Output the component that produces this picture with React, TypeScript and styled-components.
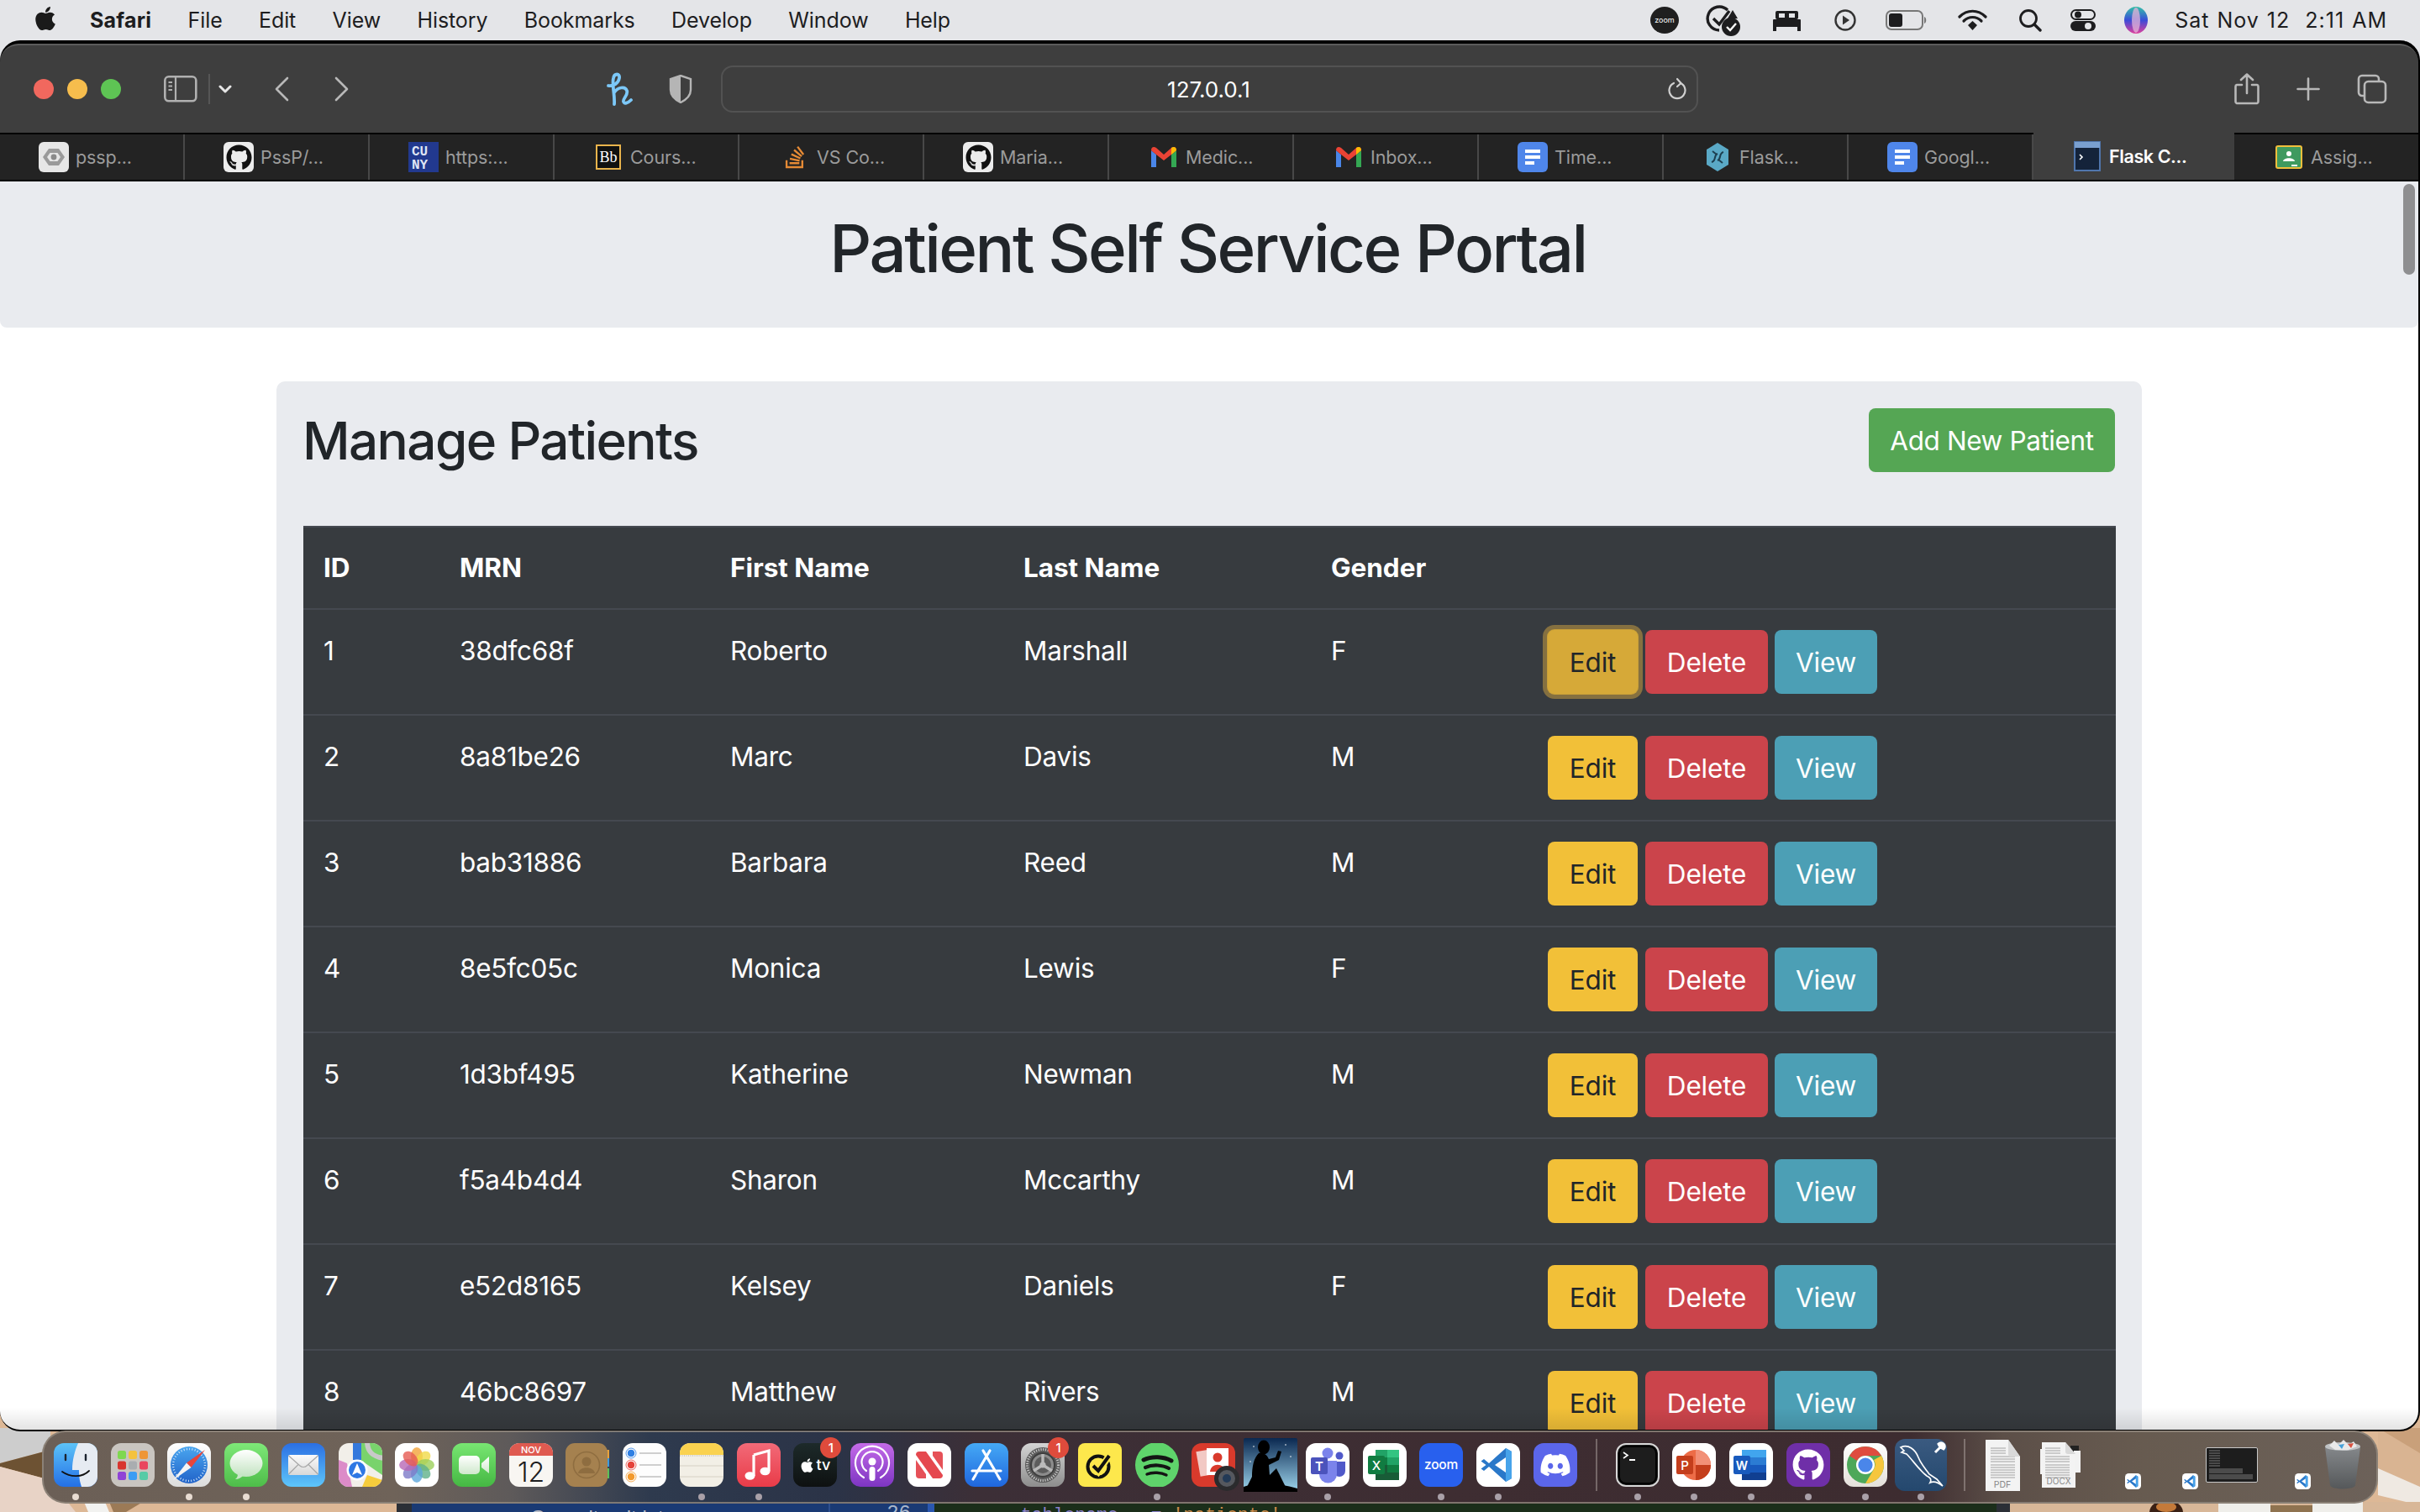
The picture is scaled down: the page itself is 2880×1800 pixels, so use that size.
import React from "react";
import styled, { createGlobalStyle } from "styled-components";
import { FaApple, FaGithub, FaDiscord, FaStackOverflow } from "react-icons/fa";

const Global = createGlobalStyle`
  html, body { margin: 0; padding: 0; width: 2880px; height: 1800px; overflow: hidden; }
  body { font-family: Inter, "Liberation Sans", sans-serif; }
  * { box-sizing: border-box; }
`;

/* ---------- desktop ---------- */
const Desktop = styled.div`
  position: relative; width: 2880px; height: 1800px; overflow: hidden;
  background: #e4e5e8; display: flex; flex-direction: column;
`;
const Wallpaper = styled.svg`
  position: absolute; left: 0; bottom: 0; width: 2880px; height: 130px;
`;

/* ---------- menu bar ---------- */
const MenuBar = styled.header`
  position: relative; height: 48px; flex: none; display: flex; align-items: center;
  padding: 0 39px 0 41px; color: #1d1d1f; font-size: 25px;
`;
const AppleMark = styled.span`
  display: flex; width: 26px; margin-right: 40px; font-size: 32px; margin-top: -4px; color: #1a1a1a;
`;
const MenuItem = styled.span<{ $bold?: boolean }>`
  margin-right: 43.4px; letter-spacing: ${p => (p.$bold ? "0.2px" : "-0.1px")}; font-weight: ${p => (p.$bold ? 700 : 400)};
`;
const StatusGroup = styled.div`
  margin-left: auto; display: flex; align-items: center;
`;
const StatusSlot = styled.span<{ $gap: number }>`
  display: flex; margin-left: ${p => p.$gap}px;
`;
const Clock = styled.span`
  margin-left: 32px; white-space: pre; font-size: 25px; letter-spacing: 1px; word-spacing: 1px;
`;

/* ---------- safari window ---------- */
const Window = styled.main`
  position: relative; z-index: 1; width: 2880px; height: 1656px; flex: none;
  display: flex; flex-direction: column; overflow: hidden;
  background: #000; border-radius: 24px 24px 24px 24px; padding-top: 4px;
  border-bottom: 2px solid #000; border-right: 2px solid #000;
`;
const Toolbar = styled.div`
  height: 106px; flex: none; position: relative; display: flex; align-items: center;
  background: #3e3e3e; border-top: 2px solid #5c5c5c; border-radius: 22px 22px 0 0;
`;
const Lights = styled.div`
  display: flex; gap: 16px; margin-left: 40px; margin-right: 51px;
`;
const Light = styled.span<{ $c: string }>`
  width: 24px; height: 24px; border-radius: 50%; background: ${p => p.$c};
`;
const ToolIcon = styled.span<{ $ml: number }>`
  display: flex; margin-left: ${p => p.$ml}px; flex: none;
`;
const UrlBar = styled.div`
  width: 1163px; height: 56px; margin-left: 34px; border: 2px solid #525252; border-radius: 14px;
  display: flex; align-items: center; justify-content: center; position: relative;
  color: #fff; font-size: 26px; letter-spacing: 0; padding-right: 2px;
`;
const Reload = styled.span`
  position: absolute; right: 12px; top: 12px; display: flex;
`;
const TabBar = styled.nav`
  height: 58px; flex: none; display: flex; background: #232323;
  border-top: 2px solid #000; border-bottom: 2px solid #000;
`;
const Tab = styled.div<{ $active?: boolean; $w: number; $pad: number }>`
  width: ${p => p.$w}px; flex: none; display: flex; align-items: center; gap: 8px;
  padding-left: ${p => p.$pad}px; font-size: 21.5px; white-space: nowrap;
  color: ${p => (p.$active ? "#fff" : "#9b9b9b")};
  font-weight: ${p => (p.$active ? 600 : 400)};
  letter-spacing: ${p => (p.$active ? "-0.4px" : "-0.1px")};
  background: ${p => (p.$active ? "#3e3e3e" : "transparent")};
  border-right: 2px solid ${p => (p.$active ? "transparent" : "#484848")};
  margin-top: ${p => (p.$active ? "-2px" : "0")};
  &:last-child { border-right: none; }
`;
const Favicon = styled.span<{ $bg?: string; $r?: number }>`
  width: 36px; height: 36px; flex: none; display: flex; align-items: center; justify-content: center;
  background: ${p => p.$bg || "transparent"}; border-radius: ${p => p.$r ?? 6}px;
`;

/* ---------- page ---------- */
const Page = styled.section`
  flex: 1; min-height: 0; position: relative; overflow: hidden; background: #fff;
  color: #212529; font-size: 32px; line-height: 48px;
`;
const Jumbotron = styled.div`
  background: #e9ebef; border-radius: 0 0 8px 8px; padding: 32px 3px 46px 0; text-align: center;
`;
const Title = styled.h1`
  margin: 0; font-size: 78px; line-height: 96px; font-weight: 500; letter-spacing: -2.55px;
`;
const Card = styled.div`
  width: 2220px; margin: 64px 0 0 329px; padding: 32px; background: #e9ebef; border-radius: 10px;
`;
const CardHead = styled.div`
  display: flex; justify-content: space-between; align-items: center; margin-bottom: 64px;
`;
const Heading = styled.h2`
  margin: 0 0 0 -1px; height: 76px; font-size: 62px; line-height: 78px; font-weight: 500; letter-spacing: -1.6px;
`;
const AddButton = styled.button`
  width: 293px; height: 76px; border: 0; border-radius: 8px; background: #55a654; color: #fff;
  font: 400 31.5px/48px Inter, sans-serif; letter-spacing: -0.4px; padding: 1px 0 0;
`;
const Table = styled.table`
  width: 2157px; table-layout: fixed; border-collapse: collapse; background: #373b3f; color: #fff;
`;
const Th = styled.th`
  text-align: left; padding: 24px; font-weight: 700; font-size: 31.5px; letter-spacing: -0.05px;
  border-top: 2px solid #454950; border-bottom: 0; height: 98px;
`;
const Td = styled.td`
  padding: 24px; vertical-align: top; border-top: 2px solid #454950; font-size: 31.5px; line-height: 50px; letter-spacing: -0.25px;
`;
const Actions = styled.div`
  display: flex; gap: 8px; height: 76px;
`;
const toneStyles = {
  edit: { bg: "#f2c038", fg: "#212529", w: 107 },
  del: { bg: "#cb444b", fg: "#fff", w: 146 },
  view: { bg: "#4c9fb5", fg: "#fff", w: 122 },
};
const ActionBtn = styled.button<{ $tone: keyof typeof toneStyles; $focus?: boolean }>`
  height: 76px; border: 0; border-radius: 8px; padding: 1px 0 0; letter-spacing: -0.2px;
  font: 400 31.5px/48px Inter, sans-serif;
  width: ${p => toneStyles[p.$tone].w}px;
  color: ${p => toneStyles[p.$tone].fg};
  background: ${p => (p.$focus ? "#d6a938" : toneStyles[p.$tone].bg)};
  box-shadow: ${p => (p.$focus ? "0 0 0 1px #c9a038, 0 0 0 6px #857040" : "none")};
  margin-right: ${p => (p.$tone === "edit" ? 1 : 0)}px;
`;
const ScrollThumb = styled.span`
  position: absolute; top: 3px; right: 4px; width: 14px; height: 108px; border-radius: 7px; background: #8e8e90;
`;
const DockShade = styled.span`
  position: absolute; left: 0; right: 0; bottom: 0; height: 26px;
  background: linear-gradient(180deg, rgba(0,0,0,0), rgba(0,0,0,.11));
`;

/* ---------- behind the dock ---------- */
const EditorWindow = styled.div`
  position: absolute; left: 472px; width: 1920px; bottom: 0; height: 11px; overflow: hidden;
  display: flex; background: #1a3a74; border-left: 18px solid #2b2f36; border-right: 16px solid #2b2f36;
  font: 21.5px/26px "Liberation Mono", monospace;
`;
const Sidebar = styled.div`
  width: 496px; flex: none; color: #b8bcc6; padding: 5px 0 0 141px; white-space: pre;
  font-family: "Liberation Sans", sans-serif; font-size: 24px;
`;
const Gutter = styled.div`
  width: 126px; flex: none; color: #a9b7cc; text-align: right; padding: 0 20px 0 0; font-size: 24px;
  border-right: 8px solid #2a57b0; border-left: 2px solid #2d4f8f;
`;
const CodeLine = styled.div`
  flex: 1; background: #1b2e1a; padding: 2px 0 0 77px; color: #8a80c8; white-space: pre;
`;
const Str = styled.span`
  color: #c98a4a;
`;

/* ---------- dock ---------- */
const DockRow = styled.footer`
  position: relative; z-index: 2; flex: 1; margin-top: -1px;
`;
const Dock = styled.div`
  position: relative; margin-left: 50px; width: 2780px; height: 87px; display: flex; align-items: center;
  padding: 0 0 5px 12px; gap: 15.73px; border-radius: 28px; border: 2px solid rgba(150,140,130,.75);
  background: linear-gradient(90deg, #6b5f56 0, #6f6359 15%, #5e5a5a 20%, #2e3a4e 26%, #2b3347 34%, #3c2f37 40%, #3e2d32 60%, #3d2c30 80%, #5c4f48 84%, #675b50 90%, #6c6159 100%);
`;
const DockItem = styled.div<{ $w?: number; $ml?: number }>`
  position: relative; flex: none; width: ${p => p.$w ?? 52}px; height: 52px;
  margin-left: ${p => p.$ml ?? 0}px; display: flex; align-items: center; justify-content: center;
`;
const Tile = styled.span<{ $bg: string }>`
  width: 52px; height: 52px; border-radius: 12px; background: ${p => p.$bg};
  display: flex; align-items: center; justify-content: center; color: #fff; font-size: 38px;
`;
const Dot = styled.i<{ $c?: string }>`
  position: absolute; left: 50%; bottom: -16px; width: 8px; height: 8px; margin-left: -4px;
  border-radius: 50%; background: ${p => p.$c || "#a9a0a8"};
`;
const Badge = styled.b`
  position: absolute; top: -7px; right: -5px; width: 25px; height: 25px; border-radius: 50%;
  background: #df4b3c; color: #fff; font: 500 15px/25px Inter, sans-serif; text-align: center;
`;
const Separator = styled.span<{ $ml: number; $mr: number }>`
  width: 2px; height: 62px; background: rgba(200,190,185,.4); flex: none;
  margin: 0 ${p => p.$mr}px 0 ${p => p.$ml}px;
`;
const MiniBadge = styled.span`
  position: absolute; right: 0; bottom: -3px; width: 19px; height: 19px; display: flex;
`;

/* ---------- small drawings ---------- */
type SP = { w: number; h: number; children: React.ReactNode };
const Ic = ({ w, h, children }: SP) => (
  <svg width={w} height={h} viewBox={`0 0 ${w} ${h}`} fill="none" style={{ display: "block" }}>{children}</svg>
);
const tool = { stroke: "#b8b8b8", strokeWidth: 2.6, strokeLinecap: "round" as const, strokeLinejoin: "round" as const };

const Vs = ({ size = 52 }: { size?: number }) => (
  <svg width={size} height={size} viewBox="0 0 52 52" style={{ display: "block" }}>
    <rect width="52" height="52" rx="12" fill="#fff" />
    <path d="M35 6 L42 10 V42 L35 46 L15 28 L9 33 L5.5 30.5 L11.5 26 L5.5 21.5 L9 19 L15 24 Z" fill="#2a78c9" />
    <path d="M35 6 L42 10 V42 L35 46 Z" fill="#47a3ea" />
    <path d="M35 17 L22 26 L35 35 Z" fill="#fff" />
  </svg>
);
const Gmail = () => (
  <svg width="30" height="24" viewBox="0 0 30 24">
    <path d="M0 4 V24 H6 V9 Z" fill="#4a86e8" />
    <path d="M24 9 V24 H30 V4 Z" fill="#34a853" />
    <path d="M0 4 C0 0 3 -1 6 1 L15 9 L24 1 C27 -1 30 0 30 4 L24 9 L15 16 L6 9 Z" fill="#ea4335" />
    <path d="M24 1 C27 -1 30 0 30 4 L24 9 Z" fill="#fbbc04" />
  </svg>
);
const Docs = () => (
  <Favicon $bg="#4f86ea">
    <svg width="22" height="24" viewBox="0 0 22 24">
      <rect x="2" y="3" width="18" height="4" fill="#fff" /><rect x="2" y="10" width="18" height="4" fill="#fff" /><rect x="2" y="17" width="11" height="4" fill="#fff" />
    </svg>
  </Favicon>
);

const tabs: { label: string; icon: React.ReactNode; active?: boolean; w?: number; pad?: number }[] = [
  { label: "pssp...", icon: <Favicon $bg="#e6e6e6"><svg width="28" height="24" viewBox="0 0 28 24"><path d="M8 2 H20 L27 12 L20 22 H8 L1 12 Z" fill="#9a9a9a" /><path d="M9.5 7 H18.5 L22 12 L18.5 17 H9.5 L6 12 Z" fill="#e6e6e6" /><circle cx="14" cy="12" r="3.4" fill="#8a8a8a" /></svg></Favicon> },
  { label: "PssP/...", icon: <Favicon $bg="#ececec"><FaGithub size={31} color="#111" /></Favicon> },
  { label: "https:...", pad: 46, icon: <Favicon $bg="#22398f" $r={0}><svg width="36" height="36" viewBox="0 0 36 36"><text x="4" y="16" fontFamily="Liberation Mono" fontWeight="700" fontSize="16" fill="#dfe4f4">CU</text><text x="4" y="32" fontFamily="Liberation Mono" fontWeight="700" fontSize="16" fill="#dfe4f4">NY</text></svg></Favicon> },
  { label: "Cours...", pad: 46, icon: <Favicon $r={2}><svg width="30" height="30" viewBox="0 0 30 30"><rect x="1" y="1" width="28" height="28" fill="#111" stroke="#e9b44c" strokeWidth="2" /><text x="15" y="21" textAnchor="middle" fontFamily="Liberation Serif" fontSize="18" fill="#fff">Bb</text></svg></Favicon> },
  { label: "VS Co...", pad: 48, icon: <Favicon><FaStackOverflow size={30} color="#e58a35" /></Favicon> },
  { label: "Maria...", icon: <Favicon $bg="#ececec"><FaGithub size={31} color="#111" /></Favicon> },
  { label: "Medic...", pad: 47, icon: <Favicon><Gmail /></Favicon> },
  { label: "Inbox...", pad: 47, icon: <Favicon><Gmail /></Favicon> },
  { label: "Time...", icon: <Docs /> },
  { label: "Flask...", icon: <Favicon><svg width="30" height="36" viewBox="0 0 30 36"><path d="M15 1 L28 9 V27 L15 35 L2 27 V9 Z" fill="#5aa9c6" /><path d="M8 24 C14 22 10 16 15 14 M22 12 C16 14 20 20 15 22 M9 11 L14 15 M16 21 L21 25" stroke="#1d3f50" strokeWidth="2" fill="none" /></svg></Favicon> },
  { label: "Googl...", icon: <Docs /> },
  { label: "Flask C...", active: true, w: 239, icon: <Favicon $r={0}><svg width="32" height="36" viewBox="0 0 32 36"><rect x="1" y="1" width="30" height="34" fill="#14233a" stroke="#5076ad" strokeWidth="2" /><rect x="1" y="1" width="30" height="7" fill="#7aa0d0" /><path d="M7 16 l3 3 -3 3" stroke="#fff" strokeWidth="1.6" fill="none" /></svg></Favicon> },
  { label: "Assig...", w: 221, pad: 47, icon: <Favicon $r={2}><svg width="32" height="28" viewBox="0 0 32 28"><rect x="1" y="1" width="30" height="26" rx="2" fill="#3f9a5f" stroke="#f1bf3c" strokeWidth="2" /><circle cx="16" cy="10" r="3" fill="#fff" /><path d="M9 19 C10 14 22 14 23 19 Z" fill="#fff" /><rect x="19" y="23" width="7" height="2" fill="#fff" /></svg></Favicon> },
];

const rows = [
  ["1", "38dfc68f", "Roberto", "Marshall", "F"],
  ["2", "8a81be26", "Marc", "Davis", "M"],
  ["3", "bab31886", "Barbara", "Reed", "M"],
  ["4", "8e5fc05c", "Monica", "Lewis", "F"],
  ["5", "1d3bf495", "Katherine", "Newman", "M"],
  ["6", "f5a4b4d4", "Sharon", "Mccarthy", "M"],
  ["7", "e52d8165", "Kelsey", "Daniels", "F"],
  ["8", "46bc8697", "Matthew", "Rivers", "M"],
];

const DockSvg = ({ children, w = 52, h = 52 }: { children: React.ReactNode; w?: number; h?: number }) => (
  <svg width={w} height={h} viewBox={`0 0 ${w} ${h}`} style={{ display: "block", flex: "none" }}>{children}</svg>
);
const Grad = ({ id, a, b, x = false }: { id: string; a: string; b: string; x?: boolean }) => (
  <linearGradient id={id} x1="0" y1="0" x2={x ? 1 : 0} y2={x ? 0 : 1}><stop offset="0" stopColor={a} /><stop offset="1" stopColor={b} /></linearGradient>
);

const Finder = () => (
  <DockSvg>
    <defs><Grad id="fb" a="#5cc3f8" b="#2470e6" /></defs>
    <rect width="52" height="52" rx="12" fill="url(#fb)" />
    <path d="M29 0 H40 A12 12 0 0 1 52 12 V40 A12 12 0 0 1 40 52 H33 C31 46 30 41 30 32 H22 C22 20 25 9 29 0Z" fill="#e6ebf2" />
    <path d="M14 14 V20 M38 14 V20" stroke="#1c2430" strokeWidth="2.4" strokeLinecap="round" />
    <path d="M10 34 C20 41 34 41 42 33" stroke="#111" strokeWidth="1.8" fill="none" strokeLinecap="round" />
  </DockSvg>
);
const Launchpad = () => {
  const c = ["#7fd84f", "#f4c23e", "#ee9636", "#d8352e", "#a9adb0", "#e9465e", "#8f43d6", "#3c9cf3", "#56cba6"];
  return (
    <DockSvg>
      <rect width="52" height="52" rx="12" fill="#c9c5c0" />
      {c.map((f, i) => <rect key={i} x={8 + (i % 3) * 13} y={9 + Math.floor(i / 3) * 12.5} width="10" height="10" rx="2.5" fill={f} />)}
    </DockSvg>
  );
};
const Safari = () => (
  <DockSvg>
    <defs><Grad id="sf" a="#ffffff" b="#dcdcdc" /><Grad id="sb" a="#4aa6ef" b="#2163c9" /></defs>
    <rect width="52" height="52" rx="12" fill="url(#sf)" />
    <circle cx="26" cy="26" r="22" fill="url(#sb)" />
    <circle cx="26" cy="26" r="19" fill="none" stroke="#cfe4f8" strokeWidth="2.4" strokeDasharray="1 2.3" />
    <polygon points="45,8 23,23.5 28.5,29" fill="#e8453a" />
    <polygon points="7,44 23,23.5 28.5,29" fill="#f4f4f4" />
  </DockSvg>
);
const Messages = () => (
  <DockSvg>
    <defs><Grad id="mg" a="#7ee878" b="#4ebd49" /><Grad id="mw" a="#ffffff" b="#c2e3c0" /></defs>
    <rect width="52" height="52" rx="12" fill="url(#mg)" />
    <ellipse cx="26" cy="24" rx="19.5" ry="16" fill="url(#mw)" />
    <path d="M16 36 C16 40 15 41 13 43 C17 43 20 41 22 39 Z" fill="#c8e6c6" />
  </DockSvg>
);
const Mail = () => (
  <DockSvg>
    <defs><Grad id="ml" a="#2b6fe3" b="#5ec6fb" /><Grad id="me" a="#fbfbfb" b="#d8d8d8" /></defs>
    <rect width="52" height="52" rx="12" fill="url(#ml)" />
    <rect x="8" y="14" width="36" height="24" rx="2" fill="url(#me)" />
    <path d="M8.5 15 L22 27 C24 29 28 29 30 27 L43.5 15 M8.5 37 L20 25.5 M43.5 37 L32 25.5" stroke="#a8a8a8" strokeWidth="1.2" fill="none" />
  </DockSvg>
);
const Maps = () => (
  <DockSvg>
    <defs><clipPath id="mpc"><rect width="52" height="52" rx="12" /></clipPath></defs>
    <g clipPath="url(#mpc)">
      <rect width="52" height="52" fill="#f2efe9" />
      <polygon points="22,0 52,0 52,38 26,20" fill="#79d36c" />
      <polygon points="0,20 10,24 16,52 0,52" fill="#dc8bc8" />
      <polygon points="28,52 52,52 52,44 34,38" fill="#f6cc3c" />
      <rect x="17" y="0" width="10" height="20" fill="#3478dc" />
      <path d="M34 -2 C34 10 40 16 54 18" stroke="#c9c9c9" strokeWidth="6" fill="none" />
      <circle cx="22" cy="32" r="12.5" fill="#fff" />
      <circle cx="22" cy="32" r="10" fill="#2f78e4" />
      <polygon points="22,24 28,38 22,35 16,38" fill="#fff" />
    </g>
  </DockSvg>
);
const Photos = () => {
  const c = ["#f2a23a", "#f0d948", "#9ccf5a", "#5fb089", "#5da6dc", "#7d7ac8", "#b868b6", "#e65b52"];
  return (
    <DockSvg>
      <rect width="52" height="52" rx="12" fill="#fff" />
      {c.map((f, i) => <ellipse key={i} cx="26" cy="15.5" rx="7" ry="10.5" fill={f} opacity=".8" transform={`rotate(${i * 45} 26 26)`} />)}
    </DockSvg>
  );
};
const FaceTime = () => (
  <DockSvg>
    <defs><Grad id="ft" a="#78e672" b="#45b843" /><Grad id="fw" a="#fff" b="#cfe8cc" /></defs>
    <rect width="52" height="52" rx="12" fill="url(#ft)" />
    <rect x="8" y="15" width="25" height="22" rx="5" fill="url(#fw)" />
    <path d="M35 24 L44 16 V36 L35 29 Z" fill="url(#fw)" />
  </DockSvg>
);
const Calendar = () => (
  <DockSvg>
    <rect width="52" height="52" rx="12" fill="#f8f6f2" />
    <path d="M12 0 H40 A12 12 0 0 1 52 12 V15 H0 V12 A12 12 0 0 1 12 0Z" fill="#df5a50" />
    <text x="26" y="12" textAnchor="middle" fontFamily="Inter" fontWeight="500" fontSize="11" fill="#fff">NOV</text>
    <text x="26" y="46" textAnchor="middle" fontFamily="Inter" fontWeight="300" fontSize="32" fill="#1d1d1f">12</text>
  </DockSvg>
);
const Contacts = () => (
  <DockSvg>
    <rect x="48" y="8" width="4" height="10" fill="#e8a23c" /><rect x="48" y="18" width="4" height="10" fill="#3d9ae0" /><rect x="48" y="30" width="4" height="12" fill="#5cc15a" />
    <rect width="50" height="52" rx="11" fill="#a5814f" />
    <circle cx="25" cy="26" r="15.5" fill="none" stroke="#8e6d40" strokeWidth="1.6" />
    <circle cx="25" cy="22" r="5.5" fill="#8e6d40" /><path d="M15 36 C16 27 34 27 35 36 Z" fill="#8e6d40" />
  </DockSvg>
);
const Reminders = () => (
  <DockSvg>
    <rect width="52" height="52" rx="12" fill="#fdfdfd" />
    {[["#2f7fe3", 12], ["#e5433b", 26], ["#f29a2e", 40]].map(([c, y]) => (
      <g key={String(c)}><circle cx="10" cy={Number(y)} r="4.8" fill={String(c)} stroke="#fff" strokeWidth="1" /><circle cx="10" cy={Number(y)} r="6" fill="none" stroke={String(c)} strokeWidth=".8" /><rect x="20" y={Number(y) - 1} width="26" height="2" fill="#cfcfcf" /></g>
    ))}
  </DockSvg>
);
const Notes = () => (
  <DockSvg>
    <rect width="52" height="52" rx="12" fill="#f2efe6" />
    <path d="M12 0 H40 A12 12 0 0 1 52 12 V14 H0 V12 A12 12 0 0 1 12 0Z" fill="#fad24f" />
    <path d="M0 15 H52" stroke="#aaa" strokeWidth="1" strokeDasharray="1 1.5" />
    <path d="M0 27 H52 M0 40 H52" stroke="#dfdbd0" strokeWidth="1.5" />
  </DockSvg>
);
const Music = () => (
  <DockSvg>
    <defs><Grad id="mu" a="#f26a78" b="#e93b48" /></defs>
    <rect width="52" height="52" rx="12" fill="url(#mu)" />
    <path d="M20 14 L38 9 V33" stroke="#fff" strokeWidth="3.2" fill="none" /><path d="M20 14 V39" stroke="#fff" strokeWidth="3.2" fill="none" />
    <ellipse cx="15.5" cy="39" rx="6" ry="4.8" fill="#fff" /><ellipse cx="33.5" cy="33.5" rx="6" ry="4.8" fill="#fff" />
  </DockSvg>
);
const Podcasts = () => (
  <DockSvg>
    <defs><Grad id="pc" a="#c46be8" b="#7d35c2" /></defs>
    <rect width="52" height="52" rx="12" fill="url(#pc)" />
    <g fill="none" stroke="#fff" strokeWidth="2.2" strokeLinecap="round">
      <path d="M16 41 A20 20 0 1 1 36 41" /><path d="M19 33 A12.5 12.5 0 1 1 33 33" />
    </g>
    <circle cx="26" cy="22" r="4.5" fill="#fff" /><rect x="22.5" y="28" width="7" height="17" rx="3.5" fill="#fff" />
  </DockSvg>
);
const News = () => (
  <DockSvg>
    <rect width="52" height="52" rx="12" fill="#fff" />
    <path d="M10 14 A4 4 0 0 1 14 10 H22 L42 38 A4 4 0 0 1 38 42 H30 L10 14Z" fill="#e5484f" />
    <path d="M10 20 L22 37 V42 H14 A4 4 0 0 1 10 38Z M30 10 H38 A4 4 0 0 1 42 14 V32 L30 15Z" fill="#e5484f" opacity=".95" />
  </DockSvg>
);
const AppStore = () => (
  <DockSvg>
    <defs><Grad id="as" a="#45a9f5" b="#1f66de" /></defs>
    <rect width="52" height="52" rx="12" fill="url(#as)" />
    <path d="M30 9 L14 36 M22 9 L38 36 M9 33 H43 M10 43 L13 38 M42 43 L39 38" stroke="#fff" strokeWidth="3.2" strokeLinecap="round" fill="none" />
  </DockSvg>
);
const SysPref = () => (
  <DockSvg>
    <defs><Grad id="sp" a="#d4d4d4" b="#8d8d8d" /></defs>
    <rect width="52" height="52" rx="12" fill="url(#sp)" />
    <circle cx="26" cy="26" r="21" fill="#5a5a5a" />
    <circle cx="26" cy="26" r="18.5" fill="none" stroke="#c9c9c9" strokeWidth="3" strokeDasharray="1.2 1.6" />
    <circle cx="26" cy="26" r="14" fill="#8c8c8c" stroke="#3e3e3e" strokeWidth="2" />
    <circle cx="26" cy="26" r="10" fill="#5c5c5c" />
    <path d="M26 26 V13 M26 26 L15 33 M26 26 L37 33" stroke="#b9b9b9" strokeWidth="3.4" /><circle cx="26" cy="26" r="3.6" fill="#bbb" />
  </DockSvg>
);
const Norton = () => (
  <DockSvg>
    <rect width="52" height="52" rx="8" fill="#fde84c" />
    <circle cx="24" cy="28" r="12.5" fill="none" stroke="#111" strokeWidth="4" />
    <path d="M17 27 L24 34 L37 15" stroke="#fde84c" strokeWidth="8" fill="none" />
    <path d="M18 27 L24 33 L37 15" stroke="#111" strokeWidth="4" fill="none" />
  </DockSvg>
);
const Spotify = () => (
  <DockSvg>
    <ellipse cx="26" cy="26" rx="26" ry="27" fill="#5fd36b" />
    <g fill="none" stroke="#141414" strokeLinecap="round">
      <path d="M10 20 C20 15 34 16 43 21" strokeWidth="5" /><path d="M12 29 C21 25 33 26 40 30" strokeWidth="4.2" /><path d="M14 37 C21 34 31 35 37 38" strokeWidth="3.4" />
    </g>
  </DockSvg>
);
const PhotoBooth = () => (
  <svg width="60" height="60" viewBox="0 0 60 60" style={{ display: "block", flex: "none", marginLeft: 8, marginTop: 8 }}>
    <rect x="0" y="0" width="52" height="52" rx="12" fill="#d93a2c" />
    <rect x="8" y="8" width="24" height="30" fill="#f2c9c4" transform="rotate(-10 20 24)" />
    <rect x="18" y="6" width="26" height="32" fill="#fff" />
    <circle cx="31" cy="17" r="5.5" fill="#d93a2c" /><path d="M22 34 C23 23 39 23 40 34 Z" fill="#d93a2c" />
    <circle cx="42" cy="42" r="15" fill="#2b2b2d" /><circle cx="42" cy="42" r="10" fill="#55585e" /><circle cx="42" cy="42" r="5" fill="#233a56" />
  </svg>
);
const Kindle = () => (
  <svg width="64" height="64" viewBox="0 0 64 64" style={{ display: "block", flex: "none" }}>
    <defs><Grad id="kd" a="#0a2850" b="#9fd6ee" /></defs>
    <rect width="64" height="64" rx="2" fill="url(#kd)" />
    <circle cx="50" cy="8" r=".8" fill="#fff" /><circle cx="12" cy="10" r=".8" fill="#fff" /><circle cx="56" cy="22" r=".8" fill="#fff" /><circle cx="8" cy="28" r=".8" fill="#fff" />
    <path d="M0 58 C14 52 44 54 64 60 V64 H0Z" fill="#000" />
    <ellipse cx="24" cy="11" rx="7" ry="8.5" fill="#000" />
    <path d="M18 18 C12 24 10 34 10 46 L4 58 H50 C46 50 42 42 39 36 L31 44 L30 32 L42 26 L45 16 L41 15 L38 23 L30 25 C28 20 24 17 18 18Z" fill="#000" />
  </svg>
);
const Teams = () => (
  <DockSvg>
    <rect width="52" height="52" rx="12" fill="#fff" />
    <circle cx="26" cy="12" r="6.5" fill="#7b83eb" /><circle cx="40" cy="15" r="4.5" fill="#5059c9" />
    <path d="M33 22 H47 V33 A7 7 0 0 1 33 33Z" fill="#5059c9" />
    <path d="M16 21 H37 V37 A10.5 10.5 0 0 1 16 37Z" fill="#7b83eb" />
    <rect x="6" y="17" width="20" height="20" rx="2" fill="#4b53bc" />
    <text x="16" y="33" textAnchor="middle" fontFamily="Inter" fontWeight="600" fontSize="15" fill="#fff">T</text>
  </DockSvg>
);
const Excel = () => (
  <DockSvg>
    <rect width="52" height="52" rx="12" fill="#fff" />
    <rect x="15" y="8" width="14" height="9" fill="#21a366" /><rect x="29" y="8" width="14" height="9" fill="#33c481" />
    <rect x="15" y="17" width="14" height="9" fill="#107c41" /><rect x="29" y="17" width="14" height="9" fill="#21a366" />
    <rect x="15" y="26" width="14" height="9" fill="#185c37" /><rect x="29" y="26" width="14" height="9" fill="#107c41" />
    <rect x="15" y="35" width="28" height="9" fill="#185c37" />
    <rect x="6" y="15" width="20" height="22" rx="2" fill="#107c41" />
    <text x="16" y="32" textAnchor="middle" fontFamily="Inter" fontWeight="500" fontSize="15" fill="#fff">X</text>
  </DockSvg>
);
const ZoomApp = () => (
  <DockSvg>
    <rect width="52" height="52" rx="12" fill="#2860ee" />
    <text x="26" y="31" textAnchor="middle" fontFamily="Inter" fontWeight="500" fontSize="15.5" fill="#fff" letterSpacing="-.2">zoom</text>
  </DockSvg>
);
const TerminalApp = () => (
  <DockSvg>
    <rect x="1" y="1" width="50" height="50" rx="11" fill="#1a1a1a" stroke="#d8d8d8" strokeWidth="2" />
    <rect x="4" y="4" width="44" height="44" rx="8" fill="#1d1d1d" stroke="#000" strokeWidth="2" />
    <path d="M9 11 L14 14.5 L9 18" stroke="#fff" strokeWidth="1.6" fill="none" /><rect x="16" y="19" width="7" height="2" fill="#fff" />
  </DockSvg>
);
const Ppt = () => (
  <DockSvg>
    <rect width="52" height="52" rx="12" fill="#fff" />
    <circle cx="28" cy="26" r="18" fill="#ed6c47" />
    <path d="M28 8 A18 18 0 0 1 46 26 H28Z" fill="#f29077" />
    <path d="M28 26 H46 A18 18 0 0 1 28 44Z" fill="#c43e1c" />
    <rect x="5" y="15" width="20" height="22" rx="2" fill="#c43e1c" />
    <text x="15" y="32" textAnchor="middle" fontFamily="Inter" fontWeight="500" fontSize="15" fill="#fff">P</text>
  </DockSvg>
);
const Word = () => (
  <DockSvg>
    <rect width="52" height="52" rx="12" fill="#fff" />
    <rect x="15" y="8" width="29" height="9" fill="#41a5ee" /><rect x="15" y="17" width="29" height="9" fill="#2b7cd3" /><rect x="15" y="26" width="29" height="9" fill="#185abd" /><rect x="15" y="35" width="29" height="9" fill="#103f91" />
    <rect x="5" y="15" width="20" height="22" rx="2" fill="#185abd" />
    <text x="15" y="32" textAnchor="middle" fontFamily="Inter" fontWeight="600" fontSize="14" fill="#fff">W</text>
  </DockSvg>
);
const Chrome = () => (
  <DockSvg>
    <defs><Grad id="crw" a="#fff" b="#e4e0da" /></defs>
    <rect width="52" height="52" rx="12" fill="url(#crw)" />
    <circle cx="26" cy="26" r="22" fill="#4da85a" />
    <path d="M26 4 A22 22 0 0 1 45 15 H26 A11 11 0 0 0 16 21 L7 15 A22 22 0 0 1 26 4Z" fill="#df4c3f" />
    <path d="M45 15 A22 22 0 0 1 26 48 L36 31 A11 11 0 0 0 36 20 Z" fill="#f6c63d" />
    <circle cx="26" cy="26" r="11" fill="#fff" /><circle cx="26" cy="26" r="8.6" fill="#4a86ea" />
  </DockSvg>
);
const MySql = () => (
  <svg width="62" height="62" viewBox="0 0 62 62" style={{ display: "block", flex: "none" }}>
    <defs><Grad id="mq" a="#3a5a80" b="#24486e" /></defs>
    <rect width="62" height="62" rx="12" fill="url(#mq)" />
    <path d="M7 10 C16 6 24 12 28 22 C31 30 37 36 41 42 L50 48 L57 56 C52 52 46 50 42 52 C44 48 42 46 38 44 C28 36 22 26 14 18 L8 16 L11 14Z" fill="none" stroke="#fff" strokeWidth="1.7" />
    <path d="M48 16 L55 9 M52 6 A4 4 0 0 1 58 12 L54 10 Z" stroke="#fff" strokeWidth="3" fill="#fff" />
  </svg>
);
const DocLines = () => (
  <g stroke="#8d8d8d" strokeWidth=".8">
    {[10, 13, 16, 20, 23, 26, 30, 33, 36, 39, 42, 45].map(y => <path key={y} d={`M6 ${y} H${y < 18 ? 24 : 35}`} />)}
  </g>
);
const PdfDoc = () => (
  <svg width="41" height="61" viewBox="0 0 41 61" style={{ display: "block", flex: "none" }}>
    <path d="M0 0 H27 L41 20 V61 H0Z" fill="#f3f3f3" /><DocLines />
    <path d="M27 0 L41 20 H30 Q27 20 27 17Z" fill="#d9d9d9" />
    <text x="20" y="57" textAnchor="middle" fontFamily="Inter" fontSize="10.5" fill="#888">PDF</text>
  </svg>
);
const DocxDoc = () => (
  <svg width="48" height="54" viewBox="0 0 48 54" style={{ display: "block", flex: "none" }}>
    <rect x="36" y="4" width="10" height="30" fill="#222" /><rect x="40" y="10" width="8" height="26" fill="#f2f2f2" /><rect x="0" y="8" width="10" height="30" fill="#f2f2f2" />
    <path d="M2 0 H30 L42 14 V54 H2Z" fill="#f3f3f3" /><g transform="translate(0 -3)"><DocLines /></g>
    <path d="M30 0 L42 14 H33 Q30 14 30 11Z" fill="#d9d9d9" />
    <text x="22" y="50" textAnchor="middle" fontFamily="Inter" fontSize="10" fill="#888">DOCX</text>
  </svg>
);
const TermThumb = () => (
  <svg width="62" height="42" viewBox="0 0 62 42" style={{ display: "block", flex: "none" }}>
    <rect x=".5" y=".5" width="61" height="41" rx="1.5" fill="#1d1d1d" stroke="#c8c8c8" />
    <g stroke="#b8b8b8" strokeWidth=".6">
      {[4, 7, 10, 13, 16, 19, 22].map(y => <path key={y} d={`M4 ${y} H${14 + (y % 3) * 3}`} />)}
      {[26, 28, 30, 33, 35, 37].map(y => <path key={y} d={`M4 ${y} H${y > 31 ? 56 : 44}`} />)}
    </g>
  </svg>
);
const Trash = () => (
  <svg width="46" height="60" viewBox="0 0 46 60" style={{ display: "block", flex: "none" }}>
    <defs><Grad id="tr" a="#84878a" b="#55585a" /></defs>
    <path d="M2 9 L8 54 C9 60 37 60 38 54 L44 9Z" fill="url(#tr)" />
    <ellipse cx="23" cy="8" rx="21" ry="5" fill="#bfc2c4" />
    <path d="M7 7 L13 1 L18 6 L24 0 L30 6 L36 2 L40 8 L30 12 L14 12Z" fill="#e9e9e9" />
    <path d="M18 6 L22 11 L25 5Z" fill="#46a0d8" /><path d="M29 5 L33 10 L36 4Z" fill="#d8503f" />
  </svg>
);

export default function App() {
  return (
    <Desktop>
      <Global />
      <Wallpaper viewBox="0 0 2880 130" preserveAspectRatio="none">
        <rect width="2880" height="130" fill="#ddb896" />
        <polygon points="0,30 60,30 60,56 0,72" fill="#cdcdcd" />
        <polygon points="0,72 60,56 60,92 0,76" fill="#6d5233" />
        <polygon points="0,76 60,92 90,130 0,130" fill="#e8d3c6" />
        <polygon points="100,118 125,118 130,130 105,130" fill="#f2f2f0" />
        <polygon points="130,118 170,118 150,130 135,130" fill="#9c7a56" />
        <polygon points="2830,30 2880,30 2880,64" fill="#c9a07a" />
        <polygon points="2830,30 2880,60 2880,100 2830,78" fill="#d9b492" />
        <polygon points="2830,78 2880,100 2880,122 2830,110" fill="#efe9e2" />
        <polygon points="2392,118 2880,118 2880,130 2392,130" fill="#d8b798" />
        <rect x="2640" y="118" width="62" height="12" fill="#efeeea" />
        <rect x="2702" y="122" width="50" height="8" fill="#8f7350" />
        <rect x="2752" y="118" width="60" height="12" fill="#efeeea" />
        <ellipse cx="2578" cy="130" rx="20" ry="14" fill="#3a2014" />
        <ellipse cx="2578" cy="124" rx="12" ry="6" fill="#c47a3a" />
      </Wallpaper>
      <MenuBar>
        <AppleMark><FaApple /></AppleMark>
        <MenuItem $bold>Safari</MenuItem>
        {["File", "Edit", "View", "History", "Bookmarks", "Develop", "Window", "Help"].map(m => <MenuItem key={m}>{m}</MenuItem>)}
        <StatusGroup>
          <StatusSlot $gap={0}>
            <Ic w={34} h={32}><ellipse cx="17" cy="16" rx="17" ry="16" fill="#1f1f1f" /><text x="17" y="19" textAnchor="middle" fontFamily="Inter" fontSize="9" fill="#fff">zoom</text></Ic>
          </StatusSlot>
          <StatusSlot $gap={32}>
            <Ic w={42} h={40}><path d="M26 8 A14 14 0 1 0 16 32" stroke="#1d1d1f" strokeWidth="3.4" /><path d="M9 18 L16 25 L28 9" stroke="#1d1d1f" strokeWidth="3.4" /><path d="M32 8 L38 18 H26Z" fill="#1d1d1f" /><circle cx="30" cy="28" r="11" fill="#1d1d1f" /><path d="M25 28 L29 32 L36 24" stroke="#fff" strokeWidth="2.4" /></Ic>
          </StatusSlot>
          <StatusSlot $gap={38}>
            <Ic w={33} h={26}><rect x="3" y="2" width="27" height="10" rx="2" fill="#1d1d1f" /><rect x="7" y="5" width="7" height="5" fill="#e4e5e8" /><rect x="19" y="5" width="7" height="5" fill="#e4e5e8" /><rect x="0" y="12" width="33" height="9" rx="1" fill="#1d1d1f" /><rect x="0" y="20" width="4" height="6" fill="#1d1d1f" /><rect x="29" y="20" width="4" height="6" fill="#1d1d1f" /></Ic>
          </StatusSlot>
          <StatusSlot $gap={40}>
            <Ic w={26} h={26}><circle cx="13" cy="13" r="11.5" stroke="#333" strokeWidth="2.4" /><path d="M10 7.5 L18 13 L10 18.5Z" fill="#333" /></Ic>
          </StatusSlot>
          <StatusSlot $gap={35}>
            <Ic w={50} h={24}><rect x="1" y="1" width="43" height="22" rx="6" stroke="#777" strokeWidth="2" /><rect x="4" y="4" width="16" height="16" rx="3" fill="#1d1d1f" /><path d="M46 8 C49 9 49 15 46 16Z" fill="#777" /></Ic>
          </StatusSlot>
          <StatusSlot $gap={36}>
            <Ic w={35} h={26}><path d="M2 9 C11 0 24 0 33 9" stroke="#1d1d1f" strokeWidth="3.2" strokeLinecap="round" /><path d="M7 14 C13 8 22 8 28 14" stroke="#1d1d1f" strokeWidth="3.2" strokeLinecap="round" /><path d="M12 19 L17.5 14 L23 19 L17.5 25Z" fill="#1d1d1f" /></Ic>
          </StatusSlot>
          <StatusSlot $gap={37}>
            <Ic w={28} h={28}><circle cx="12" cy="12" r="9.5" stroke="#1d1d1f" strokeWidth="2.8" /><path d="M19 19 L26 26" stroke="#1d1d1f" strokeWidth="3.4" strokeLinecap="round" /></Ic>
          </StatusSlot>
          <StatusSlot $gap={34}>
            <Ic w={30} h={26}><rect x="1" y="1" width="28" height="11" rx="5.5" stroke="#1d1d1f" strokeWidth="2" /><circle cx="9" cy="6.5" r="4" fill="#1d1d1f" /><rect x="0" y="14" width="30" height="12" rx="6" fill="#1d1d1f" /><circle cx="21" cy="20" r="4" fill="#e4e5e8" /></Ic>
          </StatusSlot>
          <StatusSlot $gap={34}>
            <Ic w={28} h={32}><defs><linearGradient id="si" x1="0" y1="0" x2="0" y2="1"><stop offset="0" stopColor="#34c0a8" /><stop offset=".5" stopColor="#3a4cd8" /><stop offset="1" stopColor="#e0409c" /></linearGradient></defs><ellipse cx="14" cy="16" rx="14" ry="16" fill="url(#si)" /><ellipse cx="14" cy="16" rx="5" ry="15" fill="#e4b4d8" opacity=".75" /></Ic>
          </StatusSlot>
          <Clock>Sat Nov 12  2:11 AM</Clock>
        </StatusGroup>
      </MenuBar>

      <Window>
        <Toolbar>
          <Lights><Light $c="#f1685e" /><Light $c="#f6bd4d" /><Light $c="#5ec454" /></Lights>
          <ToolIcon $ml={0}>
            <Ic w={40} h={32}><rect x="1.3" y="1.3" width="37" height="29" rx="4.5" stroke="#b0b0b0" strokeWidth="2.6" /><path d="M14 2 V30" stroke="#b0b0b0" strokeWidth="2.2" /><path d="M5.5 8 H10 M5.5 12.5 H10 M5.5 17 H10" stroke="#b0b0b0" strokeWidth="2" /></Ic>
          </ToolIcon>
          <ToolIcon $ml={13}><Ic w={2} h={36}><rect width="2" height="36" fill="#565656" /></Ic></ToolIcon>
          <ToolIcon $ml={10}><Ic w={16} h={12}><path d="M2 3 L8 9 L14 3" stroke="#e6e6e6" strokeWidth="3" strokeLinecap="round" strokeLinejoin="round" /></Ic></ToolIcon>
          <ToolIcon $ml={50}><Ic w={18} h={30}><path d="M16 2 L3 15 L16 28" {...tool} /></Ic></ToolIcon>
          <ToolIcon $ml={54}><Ic w={18} h={30}><path d="M2 2 L15 15 L2 28" {...tool} /></Ic></ToolIcon>
          <ToolIcon $ml={302}>
            <Ic w={36} h={40}><path d="M13 38 C14 28 10 14 12 7 C13 1 20 1 19 7 C18 13 12 17 6 16 M13 24 C17 18 26 16 28 22 C30 27 23 31 24 35 C25 38 29 37 33 33" stroke="#7cc8f8" strokeWidth="3.8" strokeLinecap="round" /></Ic>
          </ToolIcon>
          <ToolIcon $ml={42}>
            <Ic w={28} h={34}><path d="M14 1 L26 5 V18 C26 25 20 30 14 33 C8 30 2 25 2 18 V5Z" fill="#3e3e3e" stroke="#b5b5b5" strokeWidth="2.4" /><path d="M14 1 L2 5 V18 C2 25 8 30 14 33Z" fill="#b5b5b5" /></Ic>
          </ToolIcon>
          <UrlBar>
            127.0.0.1
            <Reload>
              <Ic w={22} h={28}><path d="M15 7 A9.5 9.5 0 1 1 7 7" stroke="#d0d0d0" strokeWidth="2.2" strokeLinecap="round" /><path d="M11 2 L15.5 7 L11 11" stroke="#d0d0d0" strokeWidth="2.2" strokeLinecap="round" strokeLinejoin="round" /></Ic>
            </Reload>
          </UrlBar>
          <ToolIcon $ml={638}>
            <Ic w={30} h={38}><path d="M9 14 H3 A2 2 0 0 0 1.5 16 V34 A2 2 0 0 0 3 36 H27 A2 2 0 0 0 28.5 34 V16 A2 2 0 0 0 27 14 H21 M15 24 V2 M8 8 L15 1.5 L22 8" {...tool} /></Ic>
          </ToolIcon>
          <ToolIcon $ml={44}><Ic w={28} h={28}><path d="M14 1.5 V26.5 M1.5 14 H26.5" {...tool} /></Ic></ToolIcon>
          <ToolIcon $ml={44}>
            <Ic w={36} h={36}><path d="M8 26 H6 A4 4 0 0 1 2 22 V6 A4 4 0 0 1 6 2 H22 A4 4 0 0 1 26 6 V8" {...tool} /><rect x="9" y="9" width="25" height="25" rx="4.5" {...tool} /></Ic>
          </ToolIcon>
        </Toolbar>
        <TabBar>
          {tabs.map(t => (
            <Tab key={t.label} $active={t.active} $w={t.w ?? 220} $pad={t.pad ?? 46}>
              {t.icon}
              {t.label}
            </Tab>
          ))}
        </TabBar>
        <Page>
          <Jumbotron><Title>Patient Self Service Portal</Title></Jumbotron>
          <Card>
            <CardHead>
              <Heading>Manage Patients</Heading>
              <AddButton>Add New Patient</AddButton>
            </CardHead>
            <Table>
              <colgroup>
                <col width="162" /><col width="322" /><col width="349" /><col width="366" /><col width="258" /><col width="700" />
              </colgroup>
              <thead>
                <tr><Th>ID</Th><Th>MRN</Th><Th>First Name</Th><Th>Last Name</Th><Th>Gender</Th><Th /></tr>
              </thead>
              <tbody>
                {rows.map((r, i) => (
                  <tr key={r[0]}>
                    {r.map((c, j) => <Td key={j}>{c}</Td>)}
                    <Td>
                      <Actions>
                        <ActionBtn $tone="edit" $focus={i === 0}>Edit</ActionBtn>
                        <ActionBtn $tone="del">Delete</ActionBtn>
                        <ActionBtn $tone="view">View</ActionBtn>
                      </Actions>
                    </Td>
                  </tr>
                ))}
              </tbody>
            </Table>
          </Card>
          <ScrollThumb />
          <DockShade />
        </Page>
      </Window>

      <DockRow>
        <EditorWindow>
          <Sidebar>Consult unit into</Sidebar>
          <Gutter>26</Gutter>
          <CodeLine>__tablename__ = <Str>'patients'</Str></CodeLine>
        </EditorWindow>
        <Dock>
          <DockItem><Finder /><Dot $c="#e8dcd2" /></DockItem>
          <DockItem><Launchpad /></DockItem>
          <DockItem><Safari /><Dot $c="#e8dcd2" /></DockItem>
          <DockItem><Messages /><Dot $c="#e8dcd2" /></DockItem>
          <DockItem><Mail /></DockItem>
          <DockItem><Maps /></DockItem>
          <DockItem><Photos /></DockItem>
          <DockItem><FaceTime /></DockItem>
          <DockItem><Calendar /></DockItem>
          <DockItem><Contacts /></DockItem>
          <DockItem><Reminders /></DockItem>
          <DockItem><Notes /><Dot /></DockItem>
          <DockItem><Music /><Dot /></DockItem>
          <DockItem>
            <Tile $bg="linear-gradient(180deg,#1d2a2a,#0e1111)"><FaApple size={19} /><svg width="20" height="20" viewBox="0 0 20 20"><text x="10" y="16" textAnchor="middle" fontFamily="Inter" fontWeight="500" fontSize="18" fill="#fff">tv</text></svg></Tile>
            <Badge>1</Badge>
          </DockItem>
          <DockItem><Podcasts /></DockItem>
          <DockItem><News /></DockItem>
          <DockItem><AppStore /></DockItem>
          <DockItem><SysPref /><Badge>1</Badge></DockItem>
          <DockItem><Norton /></DockItem>
          <DockItem><Spotify /><Dot /></DockItem>
          <DockItem><PhotoBooth /></DockItem>
          <DockItem><Kindle /></DockItem>
          <DockItem><Teams /><Dot /></DockItem>
          <DockItem><Excel /></DockItem>
          <DockItem><ZoomApp /><Dot /></DockItem>
          <DockItem><Vs /><Dot /></DockItem>
          <DockItem><Tile $bg="#5b66ea"><FaDiscord /></Tile></DockItem>
          <Separator $ml={6.3} $mr={6.3} />
          <DockItem><TerminalApp /><Dot /></DockItem>
          <DockItem><Ppt /><Dot /></DockItem>
          <DockItem><Word /><Dot /></DockItem>
          <DockItem><Tile $bg="#6f2fa8"><FaGithub /></Tile><Dot /></DockItem>
          <DockItem><Chrome /><Dot /></DockItem>
          <DockItem $w={62} $ml={-6.7}><MySql /><Dot /></DockItem>
          <Separator $ml={4.3} $mr={8.3} />
          <DockItem $w={41}><PdfDoc /></DockItem>
          <DockItem $w={48} $ml={9}><DocxDoc /></DockItem>
          <DockItem $w={56}><MiniBadge><Vs size={19} /></MiniBadge></DockItem>
          <DockItem $w={52}><MiniBadge><Vs size={19} /></MiniBadge></DockItem>
          <DockItem $w={62} $ml={-6.7}><TermThumb /></DockItem>
          <DockItem $w={47}><MiniBadge><Vs size={19} /></MiniBadge></DockItem>
          <DockItem $w={46}><Trash /></DockItem>
        </Dock>
      </DockRow>
    </Desktop>
  );
}
